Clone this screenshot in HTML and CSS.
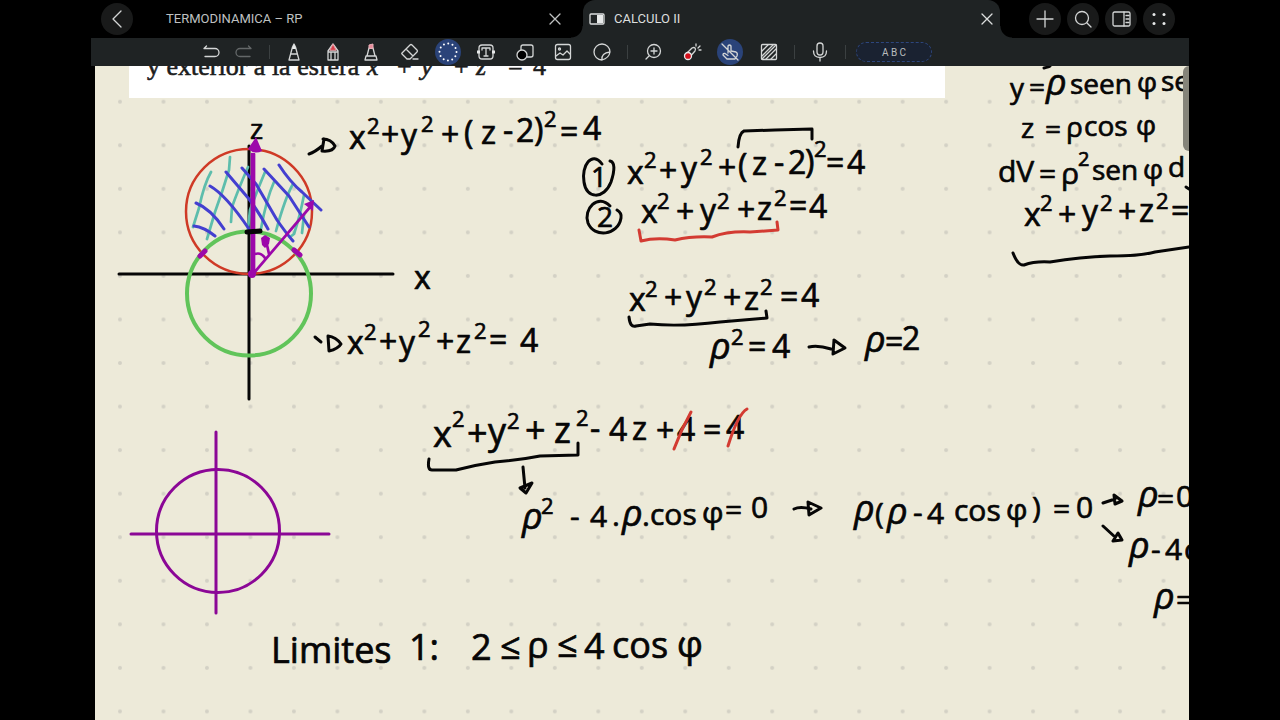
FILE: index.html
```html
<!DOCTYPE html>
<html lang="es">
<head>
<meta charset="utf-8">
<title>CALCULO II</title>
<link rel="stylesheet" href="styles.css">
</head>
<body>
<div class="app">
  <header class="tabbar">
    <button class="round" aria-label="Volver"><svg class="icon" viewBox="-12 -12 24 24"><path d="M4-8-4 0 4 8"/></svg></button>
    <nav class="tabs">
      <div class="tab">
        <span class="tab-title">TERMODINAMICA – RP</span>
        <button class="close" aria-label="Cerrar TERMODINAMICA – RP"><svg viewBox="0 0 12 12"><path d="M1 1 11 11M11 1 1 11"/></svg></button>
      </div>
      <div class="tab active">
        <svg class="split" viewBox="0 0 16 12"><rect x="1" y="1" width="14" height="10" rx="1"/><path class="fill" d="M8 2h6v8H8z"/></svg>
        <span class="tab-title">CALCULO II</span>
        <button class="close" aria-label="Cerrar CALCULO II"><svg viewBox="0 0 12 12"><path d="M1 1 11 11M11 1 1 11"/></svg></button>
      </div>
    </nav>
    <div class="actions">
      <button class="round" aria-label="Nuevo"><svg class="icon" viewBox="-12 -12 24 24"><path d="M-8 0H8M0-8V8"/></svg></button>
      <button class="round" aria-label="Buscar"><svg class="icon" viewBox="-12 -12 24 24"><circle cx="-1" cy="-1" r="6.5"/><path d="m4 4 4 4"/></svg></button>
      <button class="round" aria-label="Panel"><svg class="icon" viewBox="-12 -12 24 24"><rect x="-8" y="-7" width="17" height="14" rx="1.5"/><path d="M3-7V7M5-3.500H8M5 0H8M5 3.500H8"/></svg></button>
      <button class="round" aria-label="Más"><svg class="icon" viewBox="-12 -12 24 24"><g class="fill"><circle cx="-5" cy="-4.500" r="1.500"/><circle cx="5" cy="-4.500" r="1.500"/><circle cx="-5" cy="4.500" r="1.500"/><circle cx="5" cy="4.500" r="1.500"/></g></svg></button>
    </div>
  </header>

  <div class="toolbar" role="toolbar">
    <div class="group history">
      <button aria-label="Deshacer"><svg class="icon" viewBox="-12 -12 24 24"><path d="M-4.500-6-7-3.500H4a4 4 0 0 1 0 8H-6"/></svg></button>
      <button class="dim" aria-label="Rehacer"><svg class="icon" viewBox="-12 -12 24 24"><path d="M4.500-6 7-3.500H-4a4 4 0 0 0 0 8H6"/></svg></button>
    </div>
    <i class="sep"></i>
    <div class="group pens">
      <button aria-label="Pluma"><svg class="icon" viewBox="-12 -12 24 24"><path d="M-5 8-1.500-5 0-8 1.500-5 5 8zM-3 2H3"/><path class="fill" d="M-2-3 0-8 2-3z"/></svg></button>
      <button aria-label="Lápiz"><svg class="icon" viewBox="-12 -12 24 24"><path d="M-5 8V-1L0-8 5-1V8zM-5 0H5M-2 0V8M2 0V8"/><path class="red" d="M-3-2 0-8 3-2z"/></svg></button>
      <button aria-label="Resaltador"><svg class="icon" viewBox="-12 -12 24 24"><path d="M-6 8-5 4H5L6 8zM-4 4-2-4H2L4 4"/><path class="pink" d="M-2-4V-7L2-8V-4z"/></svg></button>
      <button aria-label="Borrador"><svg class="icon" viewBox="-12 -12 24 24"><path d="m-8 1 8-8q1-1 2 0l5 5q1 1 0 2L0 7h-3l-5-5q-.5-.5 0-1zM-4-3 3 4M3 7H8"/></svg></button>
      <button class="on" aria-label="Lazo"><svg class="icon" viewBox="-12 -12 24 24"><circle class="dots" r="8.500"/></svg></button>
      <button aria-label="Texto"><svg class="icon" viewBox="-12 -12 24 24"><rect x="-7" y="-7" width="14" height="14" rx="3"/><path d="M-4-2V-4H4v2M0-4V4M-2 4H2"/><path class="fill" d="M-9-1.500h3v3h-3zM6-1.500h3v3H6z"/></svg></button>
      <button aria-label="Formas"><svg class="icon" viewBox="-12 -12 24 24"><path d="M-4-2V-5q0-2 2-2H6q2 0 2 2V3q0 2-2 2H2"/><circle class="black" cx="-3" cy="3" r="5"/></svg></button>
      <button aria-label="Imagen"><svg class="icon" viewBox="-12 -12 24 24"><rect x="-7.500" y="-7.500" width="15" height="15" rx="2"/><path d="m-7 4 4-3 3 2 4-4 3 3"/><circle cx="-3.500" cy="-3" r="1"/></svg></button>
      <button aria-label="Adhesivo"><svg class="icon" viewBox="-12 -12 24 24"><path d="M0 8A8 8 0 1 1 8 0Q7 6 0 8zQ-1 1 8 0"/></svg></button>
    </div>
    <i class="sep"></i>
    <div class="group views">
      <button aria-label="Ampliar"><svg class="icon" viewBox="-12 -12 24 24"><circle cx="1" cy="-1" r="6.500"/><path d="M-4 4-7 7M-2-1H4M1-4V2"/></svg></button>
      <button aria-label="Puntero láser"><svg class="icon" viewBox="-12 -12 24 24"><path d="m-7 3 7-7q2-1 3 0t0 3L-4 7M4-6V-8M6-4l2-2M7-2h2"/><circle class="laser" cx="-4" cy="4" r="3.500"/></svg></button>
      <button class="on" aria-label="Solo lápiz"><svg class="icon" viewBox="-12 -12 24 24"><path d="M-2 1V-6q1.500-2 3 0V-1L6 0q2 1 1 4L5 7H-3L-7 3q0-2 2-1.500l3 2M-8-8 8 8"/></svg></button>
      <button aria-label="Fondo"><svg class="icon" viewBox="-12 -12 24 24"><rect x="-7.500" y="-7.500" width="15" height="15" rx="1"/><path d="M-7-1-1-7M-7 4 4-7M-7 7 7-7M-3 7 7-3M2 7 7 2"/></svg></button>
    </div>
    <i class="sep"></i>
    <div class="group mic">
      <button aria-label="Grabar"><svg class="icon" viewBox="-12 -12 24 24"><rect x="-3" y="-9" width="6" height="12" rx="3"/><path d="M-6.500-1q0 6.500 6.500 6.500T6.500-1M0 6V9"/></svg></button>
    </div>
    <i class="sep"></i>
    <button class="pill">A B C</button>
  </div>

  <main class="paper">
    <svg class="canvas" viewBox="95 66 1094 654" preserveAspectRatio="xMinYMin slice">
      <defs>
        <pattern id="grid" x="98.300" y="123.500" width="43.480" height="43.550" patternUnits="userSpaceOnUse"><circle class="grid-dot" cx="21.700" cy="21.800" r="2"/></pattern>
      </defs>
      <rect x="95" y="66" width="1094" height="654" fill="url(#grid)"/>

      <rect class="clip-bg" x="129" y="60" width="816" height="38"/>
      <text class="print" y="75"><tspan x="147">y exterior a la esfera</tspan> <tspan class="it" x="367">x</tspan> <tspan x="397">+</tspan> <tspan class="it" x="421">y</tspan> <tspan x="454">+</tspan> <tspan class="it" x="476">z</tspan> <tspan x="508">=</tspan> <tspan x="533">4</tspan></text>

      <!-- spheres -->
      <path class="pen" d="M119 274H393M249 146V399"/>
      <text class="ink s28" x="250" y="139">z</text>
      <text class="ink s32" x="414" y="289">x</text>
      <ellipse class="stroke red-ring" cx="249" cy="211.500" rx="63" ry="62.500"/>
      <circle class="stroke green" cx="249" cy="293.500" r="62"/>
      <path class="stroke teal" d="M211 172Q204 184 199 208L193 227M230 157 229 170Q223 190 215 212L207 239M248 167Q238 190 232 207L231 222M265 172Q257 191 250 210L248 229M274 182Q266 200 261 229M293 184Q285 198 276 231M304 195Q300 216 294 234L290 237M304 215 302 233"/>
      <path class="stroke blue" d="M194 226Q204 227 215 236M196 203Q211 209 224 229M210 186Q226 195 249 229M226 172 249 199Q258 211 268 229M242 168 256 184 277 220Q286 233 293 241M264 169 289 196 309 227M279 165Q290 182 302 192L321 210"/>
      <path class="stroke violet" d="M252 274V154M254 274V154M253 274 311 206M255 254Q261 252 265 258"/>
      <path class="tip" d="M248 149 256 137 262 151Q255 155 248 149zM304 204 314 200 313 211zM261 238l4-3 5 3-1 6-4 4-3-3z"/>
      <circle class="tip" cx="252" cy="274" r="4"/>
      <path class="stroke violet" d="M267 245 269 254"/>
      <path class="stroke violet mark" d="M200 256 205 251M294 250 300 255"/>
      <path class="pen mark" d="M247 232 260 231"/>

      <!-- polar section -->
      <path class="stroke purple" d="M216 432V613M131 534H329"/>
      <circle class="stroke purple" cx="218" cy="531" r="61.500"/>

      <!-- equations -->
      <path class="pen" d="M309 154Q315 152 322 146M324 139 322 151Q333 152 335 146 331 139 323 139"/>
      <text class="ink s32"><tspan x="349" y="149">x</tspan><tspan class="sup" x="367" y="134">2</tspan><tspan x="381" y="146">+</tspan><tspan x="401" y="147">y</tspan><tspan class="sup" x="421" y="132">2</tspan><tspan x="441" y="146">+</tspan><tspan x="464" y="144">(</tspan><tspan x="481" y="144">z</tspan><tspan x="503" y="142">-</tspan><tspan x="516" y="142">2</tspan><tspan x="534" y="141">)</tspan><tspan class="sup" x="544" y="127">2</tspan><tspan x="560" y="143">=</tspan><tspan x="583" y="140">4</tspan></text>

      <text class="ink s28" x="591" y="187">1</text>
      <path class="pen" d="M602 164C592 150 581 166 584 182C586 199 604 200 611 182C615 170 615 162 610 161"/>
      <text class="ink s28" x="597" y="227">2</text>
      <path class="pen" d="M610 206C598 193 583 209 588 223C594 238 618 236 621 218Q622 213 617 210"/>
      <text class="ink s32"><tspan x="627" y="184">x</tspan><tspan class="sup" x="644" y="168">2</tspan><tspan x="659" y="182">+</tspan><tspan x="681" y="180">y</tspan><tspan class="sup" x="700" y="165">2</tspan><tspan x="718" y="179">+</tspan><tspan x="738" y="177">(</tspan><tspan x="752" y="175">z</tspan><tspan x="774" y="174">-</tspan><tspan x="788" y="174">2</tspan><tspan x="805" y="173">)</tspan><tspan class="sup" x="814" y="157">2</tspan><tspan x="826" y="174">=</tspan><tspan x="847" y="174">4</tspan></text>
      <path class="pen" d="M738 147Q739 133 744 131L775 130 812 129V139"/>
      <text class="ink s32"><tspan x="641" y="223">x</tspan><tspan class="sup" x="657" y="209">2</tspan><tspan x="676" y="223">+</tspan><tspan x="700" y="222">y</tspan><tspan class="sup" x="717" y="209">2</tspan><tspan x="737" y="221">+</tspan><tspan x="757" y="220">z</tspan><tspan class="sup" x="774" y="206">2</tspan><tspan x="789" y="217">=</tspan><tspan x="809" y="218">4</tspan></text>
      <path class="stroke red-line" d="M639 230 641 241Q656 237 675 240 692 236 712 237 728 231 750 232L778 230 777 222"/>

      <text class="ink s32"><tspan x="629" y="311">x</tspan><tspan class="sup" x="645" y="297">2</tspan><tspan x="664" y="309">+</tspan><tspan x="686" y="309">y</tspan><tspan class="sup" x="704" y="295">2</tspan><tspan x="723" y="309">+</tspan><tspan x="744" y="310">z</tspan><tspan class="sup" x="760" y="295">2</tspan><tspan x="780" y="308">=</tspan><tspan x="801" y="307">4</tspan></text>
      <path class="pen" d="M629 317Q630 328 636 326L650 324Q680 327 720 322L767 318 766 311"/>
      <text class="ink s32"><tspan class="rho" x="710" y="359">ρ</tspan><tspan class="sup" x="731" y="345">2</tspan><tspan x="748" y="358">=</tspan><tspan x="772" y="358">4</tspan></text>
      <path class="pen" d="M809 347Q818 345 831 349M834 340 833 354 845 348z"/>
      <text class="ink s32"><tspan class="rho" x="865" y="352">ρ</tspan><tspan x="885" y="353">=</tspan><tspan x="902" y="350">2</tspan></text>

      <path class="pen" d="M315 337 321 342M328 336 329 351Q338 349 341 344 336 337 328 336"/>
      <text class="ink s32"><tspan x="347" y="354">x</tspan><tspan class="sup" x="364" y="340">2</tspan><tspan x="379" y="353">+</tspan><tspan x="399" y="354">y</tspan><tspan class="sup" x="418" y="337">2</tspan><tspan x="436" y="353">+</tspan><tspan x="456" y="353">z</tspan><tspan class="sup" x="474" y="339">2</tspan><tspan x="489" y="351">=</tspan><tspan x="520" y="352">4</tspan></text>

      <text class="ink s36"><tspan x="433" y="447">x</tspan><tspan class="sup" x="452" y="427">2</tspan><tspan x="467" y="446">+</tspan><tspan x="488" y="444">y</tspan><tspan class="sup" x="507" y="429">2</tspan><tspan x="525" y="443">+</tspan><tspan x="554" y="443">z</tspan><tspan class="sup" x="576" y="426">2</tspan></text>
      <text class="ink s32"><tspan x="590" y="440">-</tspan><tspan x="609" y="441">4</tspan><tspan x="632" y="440">z</tspan><tspan x="656" y="442">+</tspan><tspan x="677" y="441">4</tspan><tspan x="703" y="441">=</tspan><tspan x="726" y="439">4</tspan></text>
      <path class="stroke red-line" d="M674 449Q681 430 691 412M728 446Q738 414 747 409"/>
      <path class="pen" d="M429 459Q427 470 432 470H456Q475 465 495 462 520 460 540 456L578 455V443"/>
      <path class="pen" d="M523 467 525 488M520 488 526 493 532 483z"/>
      <text class="ink s30"><tspan class="rho" x="522" y="529">ρ</tspan><tspan class="sup" x="541" y="514">2</tspan><tspan x="570" y="527">-</tspan><tspan x="590" y="527">4</tspan><tspan x="612" y="526">.</tspan><tspan class="rho" x="622" y="526">ρ</tspan><tspan x="642" y="526">.</tspan><tspan x="650" y="525">cos</tspan><tspan x="702" y="523">φ</tspan><tspan x="725" y="520">=</tspan><tspan x="751" y="518">0</tspan></text>
      <path class="pen" d="M794 509Q800 506 811 509M808 502 809 515 821 508z"/>
      <text class="ink s30"><tspan class="rho" x="854" y="521">ρ</tspan><tspan x="875" y="524">(</tspan><tspan class="rho" x="887" y="524">ρ</tspan><tspan x="913" y="523">-</tspan><tspan x="927" y="524">4</tspan><tspan x="954" y="521">cos</tspan><tspan x="1006" y="520">φ</tspan><tspan x="1032" y="518">)</tspan><tspan x="1053" y="519">=</tspan><tspan x="1076" y="518">0</tspan></text>
      <path class="pen" d="M1103 503 1115 499M1114 495 1115 504 1122 501zM1103 526 1115 537M1118 533 1113 541 1122 540z"/>
      <text class="ink s30"><tspan class="rho" x="1138" y="507">ρ</tspan><tspan x="1157" y="509">=</tspan><tspan x="1176" y="507">0</tspan></text>
      <text class="ink s30"><tspan class="rho" x="1129" y="558">ρ</tspan><tspan x="1151" y="560">-</tspan><tspan x="1165" y="560">4</tspan><tspan x="1184" y="560">c</tspan></text>
      <text class="ink s30"><tspan class="rho" x="1154" y="609">ρ</tspan><tspan x="1176" y="610">=</tspan></text>

      <text class="ink s36"><tspan x="271" y="663">Limites</tspan> <tspan x="409" y="660">1:</tspan> <tspan x="471" y="660">2</tspan> <tspan x="500" y="659">≤</tspan> <tspan x="527" y="658">ρ</tspan> <tspan x="557" y="657">≤</tspan> <tspan x="584" y="659">4</tspan><tspan x="612" y="658">cos</tspan><tspan x="677" y="657">φ</tspan></text>

      <!-- spherical coordinates -->
      <path class="pen" d="M1044 68Q1049 67 1050 66"/>
      <text class="ink s28"><tspan x="1010" y="98">y</tspan><tspan x="1029" y="97">=</tspan><tspan class="rho" x="1046" y="95">ρ</tspan><tspan x="1070" y="94">seen</tspan><tspan x="1137" y="92">φ</tspan><tspan x="1161" y="91">se</tspan></text>
      <text class="ink s28"><tspan x="1021" y="138">z</tspan><tspan x="1045" y="139">=</tspan><tspan x="1066" y="137">ρ</tspan><tspan x="1084" y="136">cos</tspan><tspan x="1136" y="135">φ</tspan></text>
      <text class="ink s30"><tspan x="998" y="182">dV</tspan><tspan x="1039" y="184">=</tspan><tspan x="1061" y="184">ρ</tspan></text>
      <text class="ink s28"><tspan class="small" x="1078" y="166">2</tspan><tspan x="1092" y="180">sen</tspan><tspan x="1143" y="179">φ</tspan><tspan x="1168" y="177">d</tspan></text>
      <text class="ink s32"><tspan x="1024" y="226">x</tspan><tspan class="sup" x="1040" y="211">2</tspan><tspan x="1058" y="226">+</tspan><tspan x="1082" y="223">y</tspan><tspan class="sup" x="1100" y="211">2</tspan><tspan x="1118" y="223">+</tspan><tspan x="1139" y="222">z</tspan><tspan class="sup" x="1156" y="209">2</tspan><tspan x="1171" y="222">=</tspan></text>
      <path class="pen" d="M1013 253Q1018 266 1024 265 1035 261 1050 262 1080 257 1110 256 1140 256 1155 252L1189 247M1186 187 1189 189"/>
    </svg>
    <div class="scroll"></div>
  </main>
</div>
</body>
</html>
```

FILE: styles.css
```css
* { box-sizing: border-box; }
body {
  margin: 0;
  background: #000;
  color: #d4d6d6;
  font-family: Roboto, "Noto Sans", sans-serif;
}
button {
  margin: 0;
  padding: 0;
  border: 0;
  background: none;
  color: inherit;
  font: inherit;
  display: flex;
  align-items: center;
  justify-content: center;
}
.app {
  display: flex;
  flex-direction: column;
  height: 100vh;
  padding: 0 91px;
}

/* tabs */
.tabbar {
  display: flex;
  align-items: center;
  height: 38px;
  padding-left: 10px;
}
.round {
  width: 32px;
  height: 32px;
  flex: none;
  border-radius: 50%;
  background: #191a1a;
}
.tabs {
  display: flex;
  flex: 1;
  height: 100%;
  margin-left: 33px;
}
.tab {
  position: relative;
  display: flex;
  flex: 1 1 50%;
  align-items: center;
  padding-right: 22px;
  font-size: 13px;
  line-height: 16px;
  color: #bfc1c1;
}
.tab.active {
  padding: 0 7px 0 6px;
  gap: 9px;
  border-radius: 12px 12px 0 0;
  background: #1f2324;
  color: #dcdede;
}
.tab.active::before,
.tab.active::after {
  content: "";
  position: absolute;
  bottom: 0;
  width: 12px;
  height: 12px;
}
.tab.active::before {
  right: 100%;
  background: radial-gradient(circle at 0 0, #000 11px, #1f2324 12px);
}
.tab.active::after {
  left: 100%;
  background: radial-gradient(circle at 100% 0, #000 11px, #1f2324 12px);
}
.tab-title { flex: 1; white-space: nowrap; }
.close, .close svg { width: 12px; height: 12px; }
.split { width: 16px; height: 12px; }
.actions {
  display: flex;
  gap: 6px;
  padding: 0 14px 0 29px;
}

/* icons */
svg { display: block; }
.icon { width: 24px; height: 24px; flex: none; }
.tabbar svg, .toolbar svg {
  fill: none;
  stroke: currentColor;
  stroke-width: 1.3;
  stroke-linecap: round;
  stroke-linejoin: round;
}
.icon .fill, .split .fill { fill: #e8eaea; stroke: none; }
.icon .red { fill: #d8404c; stroke: #e9a0a6; stroke-width: 1; }
.icon .pink { fill: #e98b9b; stroke: #e9b0b8; stroke-width: 1; }
.icon .black { fill: #000; }
.icon .laser { fill: #d30f1b; stroke: #e8eaea; }
.icon .dots { stroke: #fff; stroke-width: 2; stroke-dasharray: 0 4.45; }

/* toolbar */
.toolbar {
  display: flex;
  align-items: center;
  height: 28px;
  padding-left: 103px;
  background: #1f2324;
}
.group { display: flex; align-items: center; justify-content: space-around; }
.group button { width: 26px; height: 26px; border-radius: 50%; }
.history { width: 66px; margin-right: 9px; }
.pens { width: 346px; margin: 0 6px 0 5px; }
.views { width: 154px; margin: 0 6px; }
.mic { width: 32px; margin: 0 9px; }
.sep { width: 1px; height: 14px; background: #3b4041; }
.dim { color: #646869; }
.group .on { background: #2a4379; }
.pill {
  width: 76px;
  height: 20px;
  margin-left: 10px;
  border: 1px dashed #2d467d;
  border-radius: 10px;
  background: #1a2231;
  font-size: 10px;
  color: #b9bcbd;
}

/* note */
.paper {
  position: relative;
  flex: 1;
  min-height: 0;
  margin-left: 4px;
  overflow: hidden;
  background: #edead9;
}
.canvas { width: 100%; height: 100%; }
.scroll {
  position: absolute;
  top: 0;
  right: 0;
  width: 6px;
  height: 85px;
  border-radius: 6px 0 0 6px;
  background: #858479;
}
.grid-dot { fill: #d3d1c5; }
.clip-bg { fill: #fff; }
.print { font: 26px "Liberation Serif", serif; fill: #1c1c1c; stroke: #1c1c1c; stroke-width: 0.6; }
.it { font-style: italic; }
.ink {
  font-family: "Open Sans", "Noto Sans", sans-serif;
  fill: #060606;
  stroke: #060606;
  stroke-width: 0.7;
  stroke-linejoin: round;
}
.s28 { font-size: 28px; }
.s30 { font-size: 30px; }
.s32 { font-size: 32px; }
.s36 { font-size: 36px; }
.sup { font-size: 22px; }
.small { font-size: 20px; }
.rho { font-size: 36px; font-style: italic; }
.pen, .stroke { fill: none; stroke: #060606; stroke-width: 3; stroke-linecap: round; stroke-linejoin: round; }
.red-ring { stroke: #cf3a26; stroke-width: 2.5; }
.green { stroke: #61c45a; stroke-width: 4; }
.teal { stroke: #5dbdac; stroke-width: 2.7; }
.blue { stroke: #443fd0; stroke-width: 3; }
.violet { stroke: #9c08aa; stroke-width: 2.7; }
.tip { fill: #9c08aa; }
.mark { stroke-width: 5; }
.purple { stroke: #8b0796; }
.red-line { stroke: #d33b32; }
```
